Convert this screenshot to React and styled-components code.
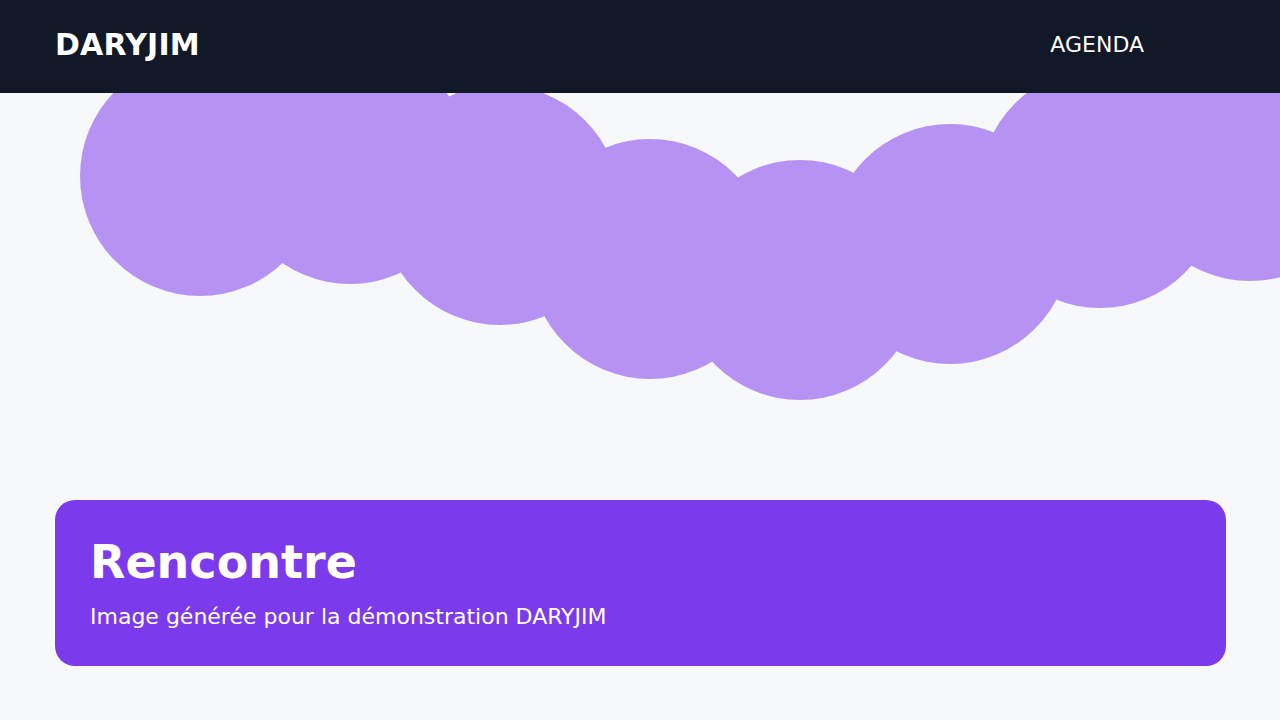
import React from 'react'
import styled, { createGlobalStyle } from 'styled-components'

const GlobalStyle = createGlobalStyle`
  * { box-sizing: border-box; }
  body {
    margin: 0;
    background: #f7f8f9;
    font-family: 'DejaVu Sans', 'Liberation Sans', sans-serif;
  }
`

const Page = styled.div`
  width: 1280px;
  height: 720px;
  overflow: hidden;
  display: flex;
  flex-direction: column;
`

const Header = styled.header`
  height: 93px;
  flex-shrink: 0;
  background: #111827;
  display: flex;
  align-items: center;
  justify-content: space-between;
  padding: 0 55px 4px;
`

const Logo = styled.div`
  color: #ffffff;
  font-weight: 700;
  font-size: 30px;
  letter-spacing: 0.2px;
`

const NavLink = styled.a`
  color: #ffffff;
  font-size: 22px;
  margin-right: 81px;
  text-decoration: none;
`

const Hero = styled.svg`
  display: block;
  width: 1280px;
  height: 407px;
  flex-shrink: 0;
`

const Card = styled.section`
  margin: 0 54px 0 55px;
  height: 166px;
  background: #7c3aed;
  border-radius: 20px;
  padding: 34px 35px;
  color: #ffffff;
`

const Title = styled.h1`
  margin: 0;
  font-size: 46px;
  font-weight: 700;
  line-height: 56px;
`

const Subtitle = styled.p`
  margin: 13px 0 0;
  font-size: 22px;
  line-height: 28px;
`

const bubbles = [
  [200, 176],
  [350, 164],
  [500, 205],
  [650, 259],
  [800, 280],
  [950, 244],
  [1100, 188],
  [1250, 161],
]

const App = () => {
  return (
    <Page>
      <GlobalStyle />
      <Header>
        <Logo>DARYJIM</Logo>
        <NavLink href="#">AGENDA</NavLink>
      </Header>
      <Hero viewBox="0 93 1280 407">
        {bubbles.map(([cx, cy]) => (
          <circle key={cx} cx={cx} cy={cy} r="120" fill="#b692f3" />
        ))}
      </Hero>
      <Card>
        <Title>Rencontre</Title>
        <Subtitle>Image générée pour la démonstration DARYJIM</Subtitle>
      </Card>
    </Page>
  )
}

export default App
